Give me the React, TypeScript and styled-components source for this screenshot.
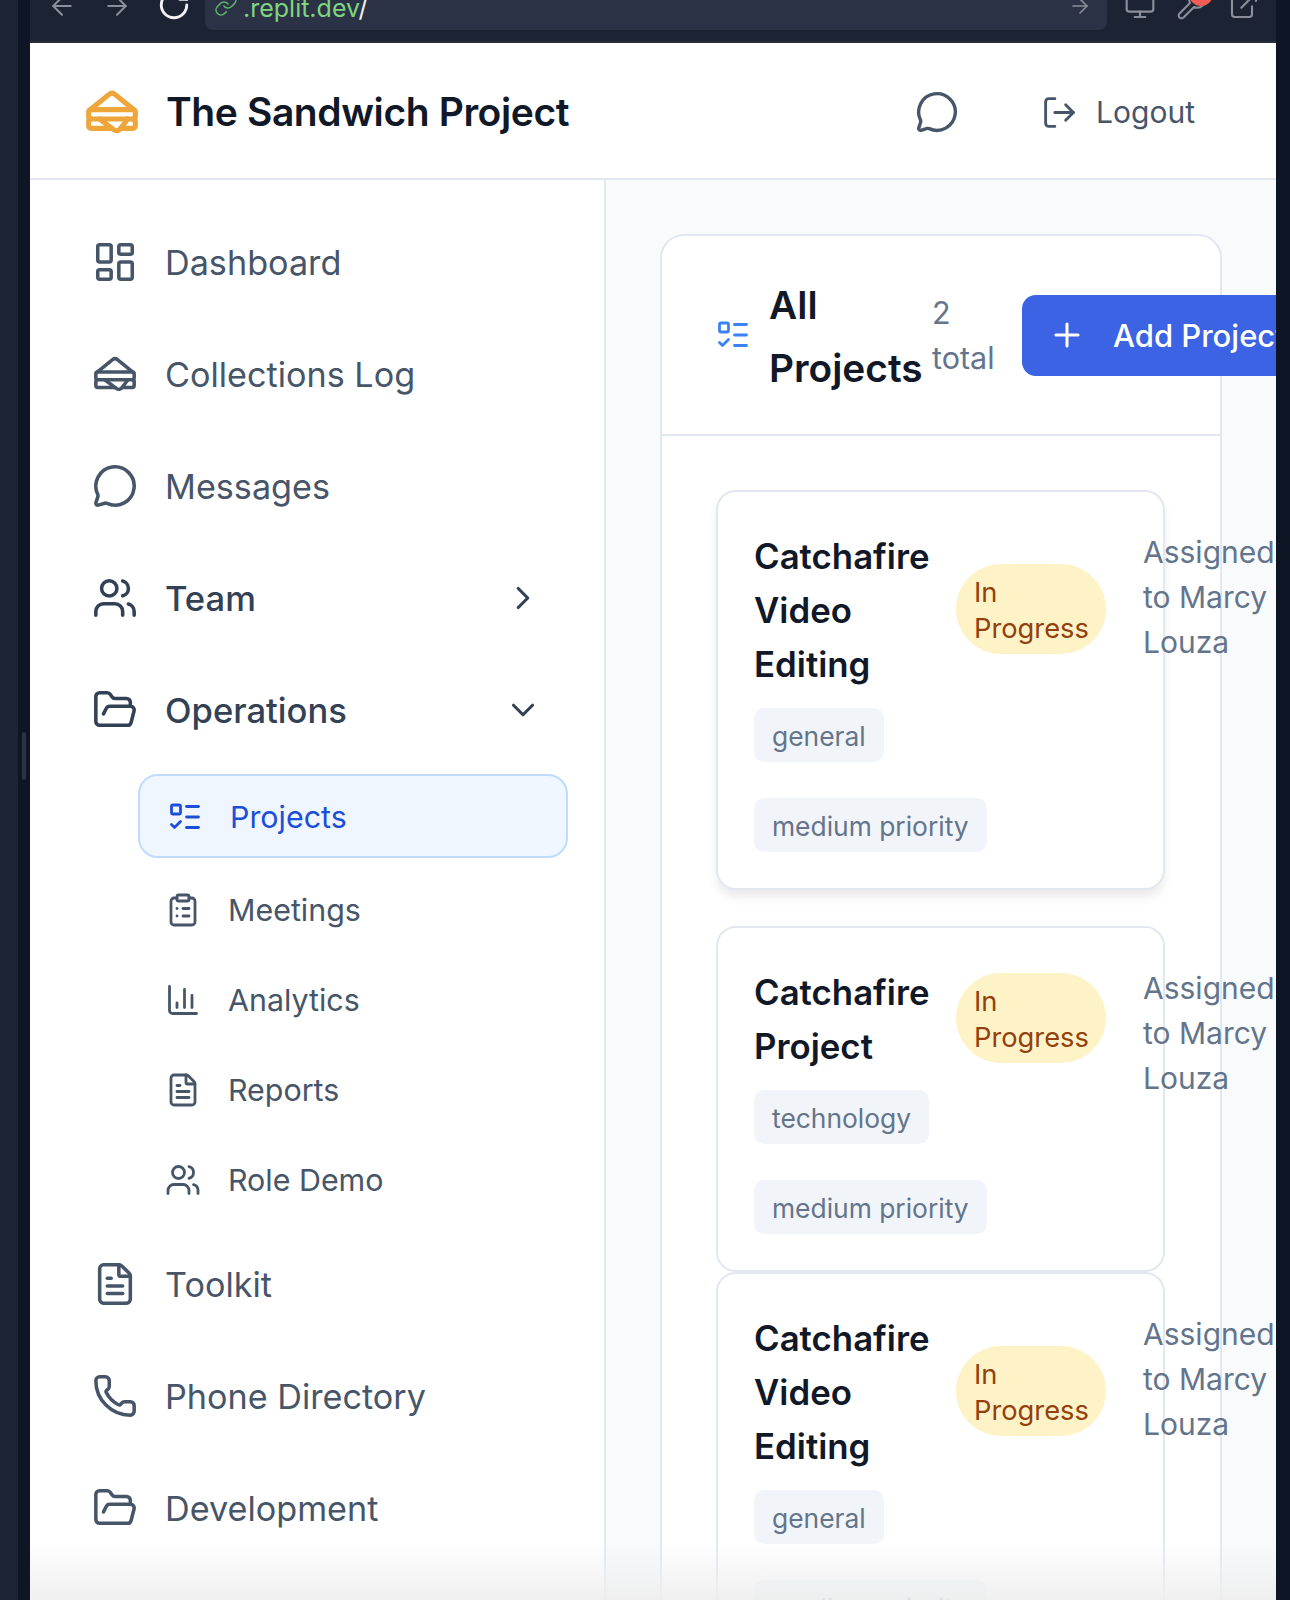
import * as React from 'react'
import styled, { createGlobalStyle } from 'styled-components'
import {
  ArrowLeft,
  ArrowRight,
  ChartColumn,
  ChevronDown,
  ChevronRight,
  ClipboardList,
  ExternalLink,
  FileText,
  FolderOpen,
  LayoutDashboard,
  Link as LinkIcon,
  ListTodo,
  LogOut,
  MessageCircle,
  Monitor,
  Phone,
  Plus,
  RotateCw,
  Sandwich,
  Users,
  Wrench,
} from 'lucide-react'

const GlobalStyle = createGlobalStyle`
  html, body {
    margin: 0;
    padding: 0;
    height: 1600px;
    overflow: hidden;
    background: #0e1525;
    font-family: Inter, "Liberation Sans", sans-serif;
  }
  * { box-sizing: border-box; }
`

// 外枠
const Shell = styled.div`
  display: grid;
  grid-template-columns: 18px 12px 1246px 14px;
  height: 1600px;
  width: 1290px;
  overflow: hidden;
`

const LeftRail = styled.div`
  background: #1c2333;
`

const RailGap = styled.div`
  background: #0e1525;
`

const ResizeGutter = styled(RailGap)`
  padding: 732px 4px 0;
`

const ResizeHandle = styled.div`
  height: 48px;
  border-radius: 2px;
  background: #2b3245;
`

const Frame = styled.div`
  position: relative;
  display: flex;
  flex-direction: column;
  height: 1600px;
  overflow: hidden;
  background: #f8fafc;
`

// 上端で切れているブラウザのツールバー
const BrowserBar = styled.div`
  display: flex;
  align-items: flex-start;
  height: 43px;
  flex: none;
  overflow: hidden;
  background: #1c2333;
  border-bottom: 2px solid #272d3d;
  padding-left: 17px;
`

const BrowserButton = styled.span<{ $light?: boolean }>`
  display: flex;
  flex: none;
  width: ${(p) => (p.$light ? 48 : 55)}px;
  margin-top: ${(p) => (p.$light ? -12 : -9)}px;
  color: ${(p) => (p.$light ? '#f2f3f5' : '#8a8f9a')};
`

const UrlBar = styled.div`
  display: flex;
  align-items: flex-end;
  justify-content: space-between;
  width: 902px;
  height: 30px;
  padding: 0 15px 7px 9px;
  flex: none;
  border-radius: 0 0 8px 8px;
  background: #2b3245;
  color: #8a8f9a;
`

const UrlText = styled.span`
  display: flex;
  align-items: flex-end;
  gap: 5px;
  font-size: 25px;
  line-height: 30px;
  color: #7fd47f;
  svg { color: #5fb56a; margin-bottom: 6px; flex: none; }
  b { font-weight: 400; color: #f2f3f5; }
`

const GoArrow = styled.span`
  display: flex;
  margin-bottom: 5px;
`

const BarTools = styled.div`
  display: flex;
  gap: 20px;
  margin: -11px 0 0 17px;
  color: #8a8f9a;
`

const ToolIcon = styled.span`
  position: relative;
  display: flex;
`

const RedDot = styled.span`
  position: absolute;
  top: -7px;
  left: 13px;
  width: 24px;
  height: 24px;
  border-radius: 50%;
  background: #f25c54;
`

const TopHeader = styled.header`
  display: flex;
  align-items: center;
  flex: none;
  height: 137px;
  padding: 3px 81px 0 54px;
  background: #fff;
  border-bottom: 2px solid #e2e8f0;
`

const Brand = styled.h1`
  margin: 0 0 0 26px;
  font-size: 39px;
  line-height: 48px;
  font-weight: 600;
  letter-spacing: -0.4px;
  color: #111827;
  flex: 1;
`

const ChatButton = styled.span`
  display: flex;
  color: #475569;
  margin-right: 82px;
`

const LogoutButton = styled.span`
  display: flex;
  align-items: center;
  gap: 18px;
  font-size: 30px;
  color: #475569;
`

const Body = styled.div`
  display: flex;
  flex: 1;
  min-height: 0;
`

const Sidebar = styled.nav`
  display: flex;
  flex-direction: column;
  width: 576px;
  flex: none;
  padding: 26px 36px 0 62px;
  background: #fff;
  border-right: 2px solid #e2e8f0;
`

const NavRow = styled.div<{ $strong?: boolean }>`
  display: flex;
  align-items: center;
  gap: 27px;
  height: 112px;
  flex: none;
  font-size: ${(p) => (p.$strong ? 34.6 : 34.2)}px;
  font-weight: ${(p) => (p.$strong ? 500 : 400)};
  color: ${(p) => (p.$strong ? '#334155' : '#475569')};
  svg { flex: none; }
`

const NavLabel = styled.span`
  flex: 1;
`

const Caret = styled.span`
  display: flex;
  margin-right: 26px;
`

const SubList = styled.div`
  display: flex;
  flex-direction: column;
  margin: 8px 0 3px 46px;
`

const SubRow = styled.div<{ $active?: boolean }>`
  display: flex;
  align-items: center;
  gap: 27px;
  height: ${(p) => (p.$active ? 84 : 90)}px;
  flex: none;
  font-size: 30.4px;
  padding-left: 27px;
  padding-top: ${(p) => (p.$active ? 2 : 0)}px;
  color: ${(p) => (p.$active ? '#1d4ed8' : '#475569')};
  background: ${(p) => (p.$active ? '#eff6ff' : 'transparent')};
  border: ${(p) => (p.$active ? '2px solid #bfdbfe' : 'none')};
  border-radius: 20px;
  margin-bottom: ${(p) => (p.$active ? 7 : 0)}px;
  svg { flex: none; }
`

const Main = styled.main`
  flex: 1;
  padding: 54px 0 0 54px;
  min-width: 0;
`

const Panel = styled.section`
  width: 562px;
  height: 1500px;
  background: #fff;
  border: 2px solid #e2e8f0;
  border-radius: 24px;
`

const PanelHead = styled.div`
  display: flex;
  align-items: center;
  height: 200px;
  padding-left: 53px;
  border-bottom: 2px solid #e2e8f0;
  color: #3b82f6;
  svg { flex: none; }
`

const PanelTitle = styled.h2`
  margin: 2px 0 0 18px;
  width: 163px;
  flex: none;
  font-size: 38.8px;
  line-height: 63px;
  font-weight: 600;
  color: #111827;
`

const TotalCount = styled.span`
  width: 66px;
  margin-right: 24px;
  flex: none;
  font-size: 30.5px;
  line-height: 45px;
  color: #64748b;
`

const AddButton = styled.button`
  display: flex;
  align-items: center;
  gap: 27px;
  flex: none;
  width: 300px;
  height: 81px;
  padding: 0 26px;
  border: none;
  border-radius: 14px;
  background: #3b63e3;
  color: #fff;
  font-family: inherit;
  font-size: 31px;
  font-weight: 500;
  white-space: nowrap;
`

const CardList = styled.div`
  padding: 54px 54px 0;
`

const Card = styled.article<{ $raised?: boolean; $after: number }>`
  width: 449px;
  padding: 36px;
  margin-bottom: ${(p) => p.$after}px;
  display: flex;
  gap: 37px;
  background: #fff;
  border: 2px solid #e2e8f0;
  border-radius: 20px;
  box-shadow: ${(p) => (p.$raised ? '0 8px 12px -2px rgba(15, 23, 42, 0.1)' : 'none')};
`

const CardMain = styled.div`
  width: 352px;
  flex: none;
`

const CardHead = styled.div`
  display: flex;
  align-items: center;
  gap: 27px;
`

const CardTitle = styled.h3`
  margin: 0 0 -1px;
  padding-top: 1px;
  width: 175px;
  flex: none;
  font-size: 34.8px;
  line-height: 54px;
  font-weight: 600;
  color: #111827;
`

const StatusBadge = styled.span`
  width: 150px;
  height: 90px;
  flex: none;
  padding: 11px 18px 0;
  border-radius: 45px;
  background: #fef3c7;
  color: #92400e;
  font-size: 27.3px;
  line-height: 36px;
`

const TagList = styled.div`
  display: flex;
  flex-direction: column;
  align-items: flex-start;
  gap: 36px;
  margin-top: 18px;
`

const Tag = styled.span`
  height: 54px;
  padding: 0 18px;
  border-radius: 10px;
  background: #f1f5f9;
  color: #64748b;
  font-size: 26.4px;
  line-height: 56px;
  white-space: nowrap;
`

const Assignee = styled.p`
  margin: 2px 0 0;
  width: 134px;
  flex: none;
  font-size: 30px;
  line-height: 45px;
  color: #64748b;
  font-weight: 400;
`

// 画面下端のフェード
const BottomFade = styled.div`
  position: absolute;
  left: 0;
  right: 0;
  bottom: 0;
  height: 60px;
  background: linear-gradient(to bottom, rgba(238, 238, 238, 0), rgba(238, 238, 238, 0.9));
  pointer-events: none;
`

const navIcon = { size: 46, strokeWidth: 1.85 }
const subIcon = { size: 36, strokeWidth: 1.85 }

type ProjectCardProps = {
  title: string
  tag: string
  raised?: boolean
  after: number
}

const ProjectCard: React.FC<ProjectCardProps> = ({ title, tag, raised, after }) => (
  <Card $raised={raised} $after={after}>
    <CardMain>
      <CardHead>
        <CardTitle>{title}</CardTitle>
        <StatusBadge>In Progress</StatusBadge>
      </CardHead>
      <TagList>
        <Tag>{tag}</Tag>
        <Tag>medium priority</Tag>
      </TagList>
    </CardMain>
    <Assignee>Assigned to Marcy Louza</Assignee>
  </Card>
)

export default function App() {
  return (
    <>
      <GlobalStyle />
      <Shell>
        <LeftRail />
        <ResizeGutter><ResizeHandle /></ResizeGutter>
        <Frame>
          <BrowserBar>
            <BrowserButton><ArrowLeft size={30} strokeWidth={1.6} /></BrowserButton>
            <BrowserButton><ArrowRight size={30} strokeWidth={1.6} /></BrowserButton>
            <BrowserButton $light><RotateCw size={34} strokeWidth={2} /></BrowserButton>
            <UrlBar>
              <UrlText>
                <LinkIcon size={24} strokeWidth={1.6} />
                <span>.replit.dev<b>/</b></span>
              </UrlText>
              <GoArrow><ArrowRight size={24} strokeWidth={1.6} /></GoArrow>
            </UrlBar>
            <BarTools>
              <ToolIcon><Monitor size={32} strokeWidth={1.6} /></ToolIcon>
              <ToolIcon>
                <Wrench size={32} strokeWidth={1.6} />
                <RedDot />
              </ToolIcon>
              <ToolIcon><ExternalLink size={32} strokeWidth={1.6} /></ToolIcon>
            </BarTools>
          </BrowserBar>
          <TopHeader>
            <Sandwich size={56} strokeWidth={2.2} color="#eea63a" />
            <Brand>The Sandwich Project</Brand>
            <ChatButton><MessageCircle size={44} strokeWidth={1.85} /></ChatButton>
            <LogoutButton>
              <LogOut size={37} strokeWidth={1.85} />
              Logout
            </LogoutButton>
          </TopHeader>
          <Body>
            <Sidebar>
              <NavRow><LayoutDashboard {...navIcon} />Dashboard</NavRow>
              <NavRow><Sandwich {...navIcon} />Collections Log</NavRow>
              <NavRow><MessageCircle {...navIcon} />Messages</NavRow>
              <NavRow $strong>
                <Users {...navIcon} />
                <NavLabel>Team</NavLabel>
                <Caret><ChevronRight size={38} strokeWidth={2} /></Caret>
              </NavRow>
              <NavRow $strong>
                <FolderOpen {...navIcon} />
                <NavLabel>Operations</NavLabel>
                <Caret><ChevronDown size={38} strokeWidth={2} /></Caret>
              </NavRow>
              <SubList>
                <SubRow $active><ListTodo {...subIcon} />Projects</SubRow>
                <SubRow><ClipboardList {...subIcon} />Meetings</SubRow>
                <SubRow><ChartColumn {...subIcon} />Analytics</SubRow>
                <SubRow><FileText {...subIcon} />Reports</SubRow>
                <SubRow><Users {...subIcon} />Role Demo</SubRow>
              </SubList>
              <NavRow><FileText {...navIcon} />Toolkit</NavRow>
              <NavRow><Phone {...navIcon} />Phone Directory</NavRow>
              <NavRow><FolderOpen {...navIcon} />Development</NavRow>
            </Sidebar>
            <Main>
              <Panel>
                <PanelHead>
                  <ListTodo size={36} strokeWidth={1.85} />
                  <PanelTitle>All Projects</PanelTitle>
                  <TotalCount>2 total</TotalCount>
                  <AddButton><Plus size={38} strokeWidth={1.9} />Add Project</AddButton>
                </PanelHead>
                <CardList>
                  <ProjectCard title="Catchafire Video Editing" tag="general" raised after={36} />
                  <ProjectCard title="Catchafire Project" tag="technology" after={0} />
                  <ProjectCard title="Catchafire Video Editing" tag="general" after={0} />
                </CardList>
              </Panel>
            </Main>
          </Body>
          <BottomFade />
        </Frame>
        <RailGap />
      </Shell>
    </>
  )
}
